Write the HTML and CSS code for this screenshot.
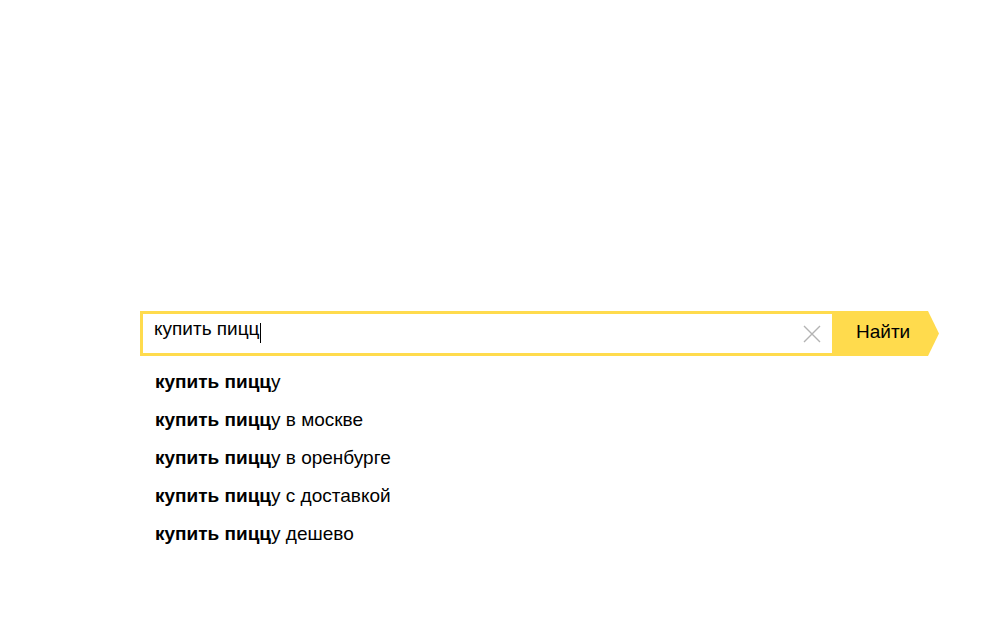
FILE: index.html
```html
<!DOCTYPE html>
<html lang="ru">
<head>
<meta charset="utf-8">
<link rel="stylesheet" href="styles.css">
</head>
<body>
<div class="page">
  <div class="search">
    <div class="field">
      <span class="query">купить пицц</span><span class="caret"></span>
      <span class="clear">
        <svg width="18" height="18" viewBox="0 0 18 18"><path d="M1 1L17 17M17 1L1 17" stroke="#b3b3b3" stroke-width="1.4" fill="none"/></svg>
      </span>
    </div>
    <div class="button">Найти</div>
  </div>
  <ul class="suggest">
    <li><b>купить пицц</b>у</li>
    <li><b>купить пицц</b>у в москве</li>
    <li><b>купить пицц</b>у в оренбурге</li>
    <li><b>купить пицц</b>у с доставкой</li>
    <li><b>купить пицц</b>у дешево</li>
  </ul>
</div>
</body>
</html>
```
FILE: styles.css
```css
html, body {
  margin: 0;
  padding: 0;
  background: #fff;
}
body {
  font-family: Arial, "Liberation Sans", sans-serif;
  color: #000;
}
.page {
  padding: 311px 0 0 140px;
}
.search {
  display: flex;
  height: 45px;
}
.field {
  width: 692px;
  border: 3px solid #ffdb4d;
  border-right: none;
  display: flex;
  align-items: flex-start;
  padding: 4px 0 0 11px;
  box-sizing: border-box;
}
.query {
  font-size: 19px;
  line-height: 22px;
}
.caret {
  width: 1px;
  height: 20px;
  background: #000;
  margin: 5px 0 0 1px;
}
.clear {
  margin: 7px 11px 0 auto;
  display: flex;
}
.button {
  width: 107px;
  background: #ffdb4d;
  font-size: 19px;
  line-height: 22px;
  padding: 10px 0 0 24px;
  box-sizing: border-box;
  clip-path: polygon(0 0, 96px 0, 107px 50%, 96px 100%, 0 100%);
}
.suggest {
  list-style: none;
  margin: 0;
  padding: 15px 0 0 15px;
}
.suggest li {
  font-size: 19px;
  line-height: 22px;
  padding-bottom: 16px;
}
.suggest b {
  font-weight: bold;
}
```
